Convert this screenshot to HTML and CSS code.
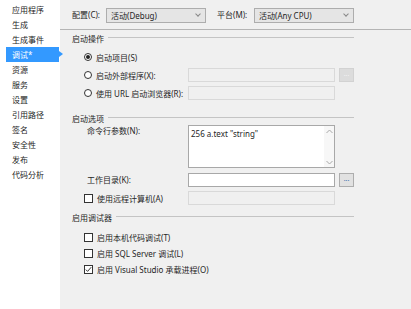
FILE: index.html
```html
<!DOCTYPE html>
<html lang="zh-CN">
<head>
    <meta charset="UTF-8">
    <title>调试 - 项目属性</title>
    <link rel="stylesheet" href="styles.css">
</head>
<body>
    <div class="page">
        <ul class="nav">
            <li>应用程序</li>
            <li>生成</li>
            <li>生成事件</li>
            <li class="active">调试*</li>
            <li>资源</li>
            <li>服务</li>
            <li>设置</li>
            <li>引用路径</li>
            <li>签名</li>
            <li>安全性</li>
            <li>发布</li>
            <li>代码分析</li>
        </ul>

        <div class="main">
            <div class="toolbar">
                <span class="tb-label">配置(C):</span>
                <div class="combo">活动(Debug)<span class="chev"></span></div>
                <span class="tb-label tb-label-2">平台(M):</span>
                <div class="combo">活动(Any CPU)<span class="chev"></span></div>
            </div>

            <div class="section">
                <div class="sec-head">启动操作</div>
                <div class="row row-1">
                    <span class="radio checked"></span>
                    <span class="opt-text">启动项目(S)</span>
                </div>
                <div class="row">
                    <div class="opt">
                        <span class="radio"></span>
                        <span class="opt-text">启动外部程序(X):</span>
                    </div>
                    <div class="field disabled"></div>
                    <div class="browse disabled">...</div>
                </div>
                <div class="row">
                    <div class="opt">
                        <span class="radio"></span>
                        <span class="opt-text">使用 URL 启动浏览器(R):</span>
                    </div>
                    <div class="field disabled"></div>
                </div>

                <div class="sec-head sec-2">启动选项</div>
                <div class="row row-area">
                    <div class="lbl">命令行参数(N):</div>
                    <div class="area">
                        <span class="area-text">256 a.text "string"</span>
                        <div class="scroll">
                            <svg width="7" height="5" viewBox="0 0 7 5"><path d="M0.5 4 L3.5 1 L6.5 4" fill="none" stroke="#a8a8a8" stroke-width="1"/></svg>
                            <svg width="7" height="5" viewBox="0 0 7 5"><path d="M0.5 1 L3.5 4 L6.5 1" fill="none" stroke="#a8a8a8" stroke-width="1"/></svg>
                        </div>
                    </div>
                </div>
                <div class="row row-dir">
                    <div class="lbl">工作目录(K):</div>
                    <div class="field"></div>
                    <div class="browse">...</div>
                </div>
                <div class="row">
                    <div class="opt">
                        <span class="check"></span>
                        <span class="opt-text">使用远程计算机(A)</span>
                    </div>
                    <div class="field disabled"></div>
                </div>

                <div class="sec-head sec-3">启用调试器</div>
                <div class="crow crow-1">
                    <span class="check"></span>
                    <span class="opt-text">启用本机代码调试(T)</span>
                </div>
                <div class="crow">
                    <span class="check"></span>
                    <span class="opt-text">启用 SQL Server 调试(L)</span>
                </div>
                <div class="crow">
                    <span class="check checked">
                        <svg width="7" height="7" viewBox="0 0 7 7"><path d="M0.8 3.6 L2.6 5.4 L6.2 1.2" fill="none" stroke="#333" stroke-width="1"/></svg>
                    </span>
                    <span class="opt-text">启用 Visual Studio 承载进程(O)</span>
                </div>
            </div>
        </div>
    </div>
</body>
</html>
```

FILE: styles.css
```css
html, body {
    margin: 0;
    padding: 0;
}
body {
    font-family: "Noto Sans", "Noto Sans CJK SC", sans-serif;
    font-size: 8px;
    color: #262626;
    background-color: #f0f0f0;
}
.page {
    display: grid;
    grid-template-columns: 60px 1fr;
    width: 411px;
    height: 309px;
    overflow: hidden;
}

/* left navigation */
.nav {
    list-style: none;
    margin: 0;
    padding: 2px 0 0 0;
    background-color: #fff;
}
.nav li {
    height: 15px;
    line-height: 15px;
    padding-left: 12px;
    white-space: nowrap;
}
.nav li.active {
    position: relative;
    margin-left: 6px;
    margin-right: 1px;
    padding-left: 6px;
    background-color: #3399ff;
    color: #fff;
}
.nav li.active::after {
    content: "";
    position: absolute;
    right: -4px;
    top: 4px;
    border-left: 4px solid #3399ff;
    border-top: 3px solid transparent;
    border-bottom: 3px solid transparent;
}

/* configuration bar */
.toolbar {
    display: flex;
    align-items: center;
    height: 29px;
    padding-left: 12px;
    border-bottom: 1px solid #b4b4b4;
}
.tb-label {
    width: 34px;
    white-space: nowrap;
}
.tb-label-2 {
    margin-left: 11px;
    width: 37px;
}
.combo {
    position: relative;
    box-sizing: border-box;
    width: 100px;
    height: 15px;
    line-height: 13px;
    padding-left: 4px;
    margin-top: 1px;
    border: 1px solid #adadad;
    background-color: #e5e5e5;
    white-space: nowrap;
}
.chev {
    position: absolute;
    right: 5px;
    top: 3px;
    width: 3px;
    height: 3px;
    border-right: 1px solid #888;
    border-bottom: 1px solid #888;
    transform: rotate(45deg);
}

/* property sections */
.section {
    padding: 1px 58px 0 12px;
}
.sec-head {
    display: flex;
    align-items: center;
    height: 14px;
    white-space: nowrap;
}
.sec-head::after {
    content: "";
    flex: 1;
    margin-left: 4px;
    margin-top: -1px;
    border-top: 1px solid #c4c4c4;
}
.sec-2 {
    margin-top: 9px;
}
.sec-3 {
    margin-top: 3px;
}
.row {
    display: flex;
    align-items: center;
    height: 18px;
    padding-left: 12px;
}
.row-1 {
    margin-top: 3px;
}
.row-area {
    align-items: flex-start;
    height: 43px;
}
.row-dir {
    margin-top: 3px;
}
.opt {
    display: flex;
    align-items: center;
    width: 104px;
}
.lbl {
    width: 101px;
    padding-left: 3px;
    line-height: 12px;
    white-space: nowrap;
}
.opt-text {
    margin-left: 4px;
    white-space: nowrap;
}
.radio {
    box-sizing: border-box;
    display: inline-flex;
    align-items: center;
    justify-content: center;
    width: 8px;
    height: 8px;
    border: 1px solid #333;
    border-radius: 50%;
    background-color: #fff;
}
.radio.checked::after {
    content: "";
    width: 4px;
    height: 4px;
    border-radius: 50%;
    background-color: #222;
}
.check {
    box-sizing: border-box;
    display: inline-flex;
    align-items: center;
    justify-content: center;
    width: 9px;
    height: 9px;
    border: 1px solid #333;
    background-color: #fff;
}
.crow {
    display: flex;
    align-items: center;
    height: 16px;
    padding-left: 12px;
}
.crow-1 {
    margin-top: 5px;
}

/* inputs */
.field {
    box-sizing: border-box;
    width: 147px;
    height: 14px;
    border: 1px solid #a8a8a8;
    background-color: #fff;
}
.field.disabled {
    border-color: #d9d9d9;
    background-color: #f0f0f0;
}
.browse {
    box-sizing: border-box;
    width: 15px;
    height: 14px;
    margin-left: 4px;
    border: 1px solid #adadad;
    background-color: #e1e1e1;
    font-size: 7px;
    line-height: 10px;
    text-align: center;
    color: #3a6fb0;
}
.browse.disabled {
    border-color: #d2d2d2;
    background-color: #dcdcdc;
    color: #f2f2f2;
}
.area {
    box-sizing: border-box;
    display: flex;
    justify-content: space-between;
    width: 147px;
    height: 43px;
    border: 1px solid #a8a8a8;
    background-color: #fff;
}
.area-text {
    padding: 2px 0 0 2px;
    line-height: 12px;
    white-space: nowrap;
}
.scroll {
    display: flex;
    flex-direction: column;
    justify-content: space-between;
    align-items: center;
    width: 10px;
    padding: 3px 0 2px 0;
    background-color: #f7f7f7;
}
.scroll svg {
    display: block;
}
```
